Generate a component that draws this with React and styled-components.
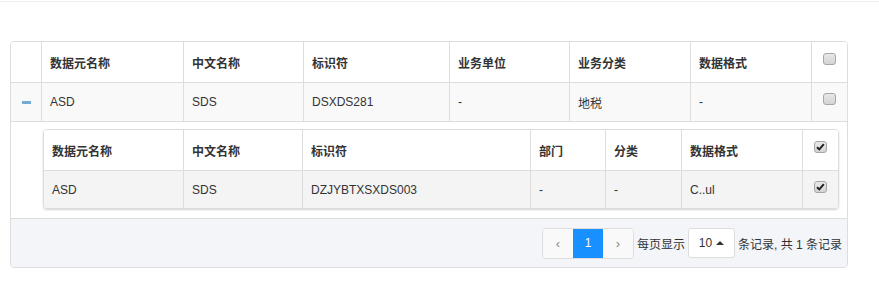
import React from "react";
import styled, { createGlobalStyle } from "styled-components";

const GlobalStyle = createGlobalStyle`
  body {
    margin: 0;
    background: #fff;
    font-family: "Liberation Sans", "Noto Sans CJK SC", sans-serif;
    font-size: 12px;
    color: #333;
  }
`;

const STopLine = styled.div`
  height: 1px;
  margin-top: 1px;
  background: #eeeeee;
`;

const SPanel = styled.div`
  width: 838px;
  box-sizing: border-box;
  margin: 39px 0 0 10px;
  border: 1px solid #dddddd;
  border-radius: 4px;
  overflow: hidden;
  background: #fff;
`;

const STable = styled.table`
  width: 100%;
  table-layout: fixed;
  border-collapse: separate;
  border-spacing: 0;
`;

const STh = styled.th`
  box-sizing: border-box;
  width: ${(p) => p.$w}px;
  height: ${(p) => p.$h || 41}px;
  padding: 0 8px;
  text-align: left;
  font-weight: bold;
  color: #333;
  border-bottom: 1px solid #dddddd;
  border-right: ${(p) => (p.$last ? "none" : "1px solid #dddddd")};
  background: #fff;
`;

const STd = styled.td`
  box-sizing: border-box;
  height: ${(p) => p.$h}px;
  padding: 0 8px;
  color: #333;
  background: ${(p) => p.$bg || "transparent"};
  border-bottom: ${(p) => (p.$noBottom ? "none" : "1px solid #dddddd")};
  border-right: ${(p) => (p.$last ? "none" : "1px solid #dddddd")};
  white-space: nowrap;
`;

const SIconCell = styled(STd)`
  padding: 0;
  text-align: center;
`;

const SCheckCell = styled(STd)`
  padding: 0;
`;

const SMinus = styled.span`
  display: block;
  width: 9px;
  height: 3px;
  margin: 0 auto;
  background: #72acd6;
`;

const SCheck = styled.span`
  display: block;
  box-sizing: border-box;
  width: 13px;
  height: 12px;
  margin: 0 auto 6px;
  border: 1px solid #a6a6a6;
  border-radius: 3px;
  background: linear-gradient(#e8e8e8, #d4d4d4);

  svg {
    display: block;
  }
`;

const SExpandCell = styled.td`
  padding: 7px 8px 9px 32px;
  border-bottom: 1px solid #dddddd;
  background: #fff;
`;

const SNested = styled.div`
  border: 1px solid #dddddd;
  border-radius: 4px;
  overflow: hidden;
  box-shadow: 0 1px 2px rgba(0, 0, 0, 0.18);
`;

const SFooter = styled.div`
  height: 48px;
  display: flex;
  align-items: center;
  justify-content: flex-end;
  padding-right: 2px;
  background: #f4f5f8;
  color: #333;
`;

const SPager = styled.div`
  display: flex;
  height: 31px;
  border: 1px solid #dddddd;
  border-radius: 4px;
  overflow: hidden;
  box-sizing: border-box;
`;

const SPageBtn = styled.span`
  width: 30px;
  display: flex;
  align-items: center;
  justify-content: center;
  background: ${(p) => (p.$active ? "#1890ff" : "#f9f9f9")};
  color: ${(p) => (p.$active ? "#fff" : "#888")};
  font-size: ${(p) => (p.$active ? "12px" : "13px")};
`;

const SLabel = styled.span`
  margin: 0 3px;
`;

const SSelect = styled.span`
  display: flex;
  align-items: center;
  justify-content: center;
  gap: 4px;
  width: 47px;
  height: 30px;
  box-sizing: border-box;
  border: 1px solid #dddddd;
  border-radius: 3px;
  background: #fff;
  color: #333;
`;

const SCaret = styled.span`
  width: 0;
  height: 0;
  border-left: 4px solid transparent;
  border-right: 4px solid transparent;
  border-bottom: 4px solid #333;
`;

const Checkbox = ({ checked }) => (
  <SCheck>
    {checked && (
      <svg width="11" height="10" viewBox="0 0 11 10">
        <path d="M2 5.2 L4.3 7.4 L8.8 2.2" stroke="#222" strokeWidth="2" fill="none" />
      </svg>
    )}
  </SCheck>
);

const outerCols = [
  { w: 31, t: "" },
  { w: 142, t: "数据元名称" },
  { w: 120, t: "中文名称" },
  { w: 146, t: "标识符" },
  { w: 120, t: "业务单位" },
  { w: 121, t: "业务分类" },
  { w: 121, t: "数据格式" },
];

const nestedCols = [
  { w: 140, t: "数据元名称" },
  { w: 119, t: "中文名称" },
  { w: 228, t: "标识符" },
  { w: 75, t: "部门" },
  { w: 76, t: "分类" },
  { w: 121, t: "数据格式" },
];

const outerRow = ["ASD", "SDS", "DSXDS281", "-", "地税", "-"];
const nestedRow = ["ASD", "SDS", "DZJYBTXSXDS003", "-", "-", "C..ul"];

export default function App() {
  return (
    <>
      <GlobalStyle />
      <STopLine />
      <SPanel>
        <STable>
          <thead>
            <tr>
              {outerCols.map((c, i) => (
                <STh key={i} $w={c.w}>
                  {c.t}
                </STh>
              ))}
              <STh $w={35} $last>
                <Checkbox />
              </STh>
            </tr>
          </thead>
          <tbody>
            <tr>
              <SIconCell $h={39} $bg="#f9f9f9">
                <SMinus />
              </SIconCell>
              {outerRow.map((v, i) => (
                <STd key={i} $h={39} $bg="#f9f9f9">
                  {v}
                </STd>
              ))}
              <SCheckCell $h={39} $bg="#f9f9f9" $last>
                <Checkbox />
              </SCheckCell>
            </tr>
            <tr>
              <SExpandCell colSpan={8}>
                <SNested>
                  <STable>
                    <thead>
                      <tr>
                        {nestedCols.map((c, i) => (
                          <STh key={i} $w={c.w}>
                            {c.t}
                          </STh>
                        ))}
                        <STh $w={35} $last>
                          <Checkbox checked />
                        </STh>
                      </tr>
                    </thead>
                    <tbody>
                      <tr>
                        {nestedRow.map((v, i) => (
                          <STd key={i} $h={37} $bg="#f4f4f4" $noBottom>
                            {v}
                          </STd>
                        ))}
                        <SCheckCell $h={37} $bg="#f4f4f4" $noBottom $last>
                          <Checkbox checked />
                        </SCheckCell>
                      </tr>
                    </tbody>
                  </STable>
                </SNested>
              </SExpandCell>
            </tr>
          </tbody>
        </STable>
        <SFooter>
          <SPager>
            <SPageBtn>‹</SPageBtn>
            <SPageBtn $active>1</SPageBtn>
            <SPageBtn>›</SPageBtn>
          </SPager>
          <SLabel>每页显示</SLabel>
          <SSelect>
            10 <SCaret />
          </SSelect>
          <SLabel>条记录, 共 1 条记录</SLabel>
        </SFooter>
      </SPanel>
    </>
  );
}
